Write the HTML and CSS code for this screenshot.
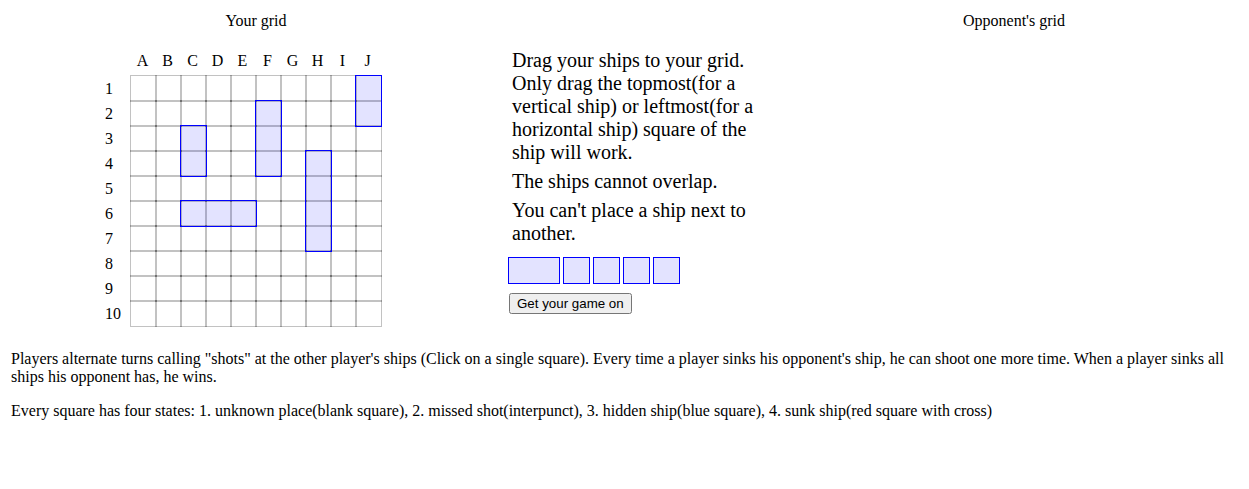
FILE: index.html
```html
<!DOCTYPE html>
<html>
<head>
<meta charset="utf-8">
<title>Battleship</title>
<link rel="stylesheet" href="styles.css">
</head>
<body>
<div class="top">
  <section class="mine">
    <div class="title">Your grid</div>
    <div class="field">
      <div class="corner"></div>
      <div class="cols">
        <span>A</span><span>B</span><span>C</span><span>D</span><span>E</span><span>F</span><span>G</span><span>H</span><span>I</span><span>J</span>
      </div>
      <div class="rows">
        <span>1</span><span>2</span><span>3</span><span>4</span><span>5</span><span>6</span><span>7</span><span>8</span><span>9</span><span>10</span>
      </div>
      <div class="board">
        <div class="cells">
          <div class="cell"></div><div class="cell"></div><div class="cell"></div><div class="cell"></div><div class="cell"></div><div class="cell"></div><div class="cell"></div><div class="cell"></div><div class="cell"></div><div class="cell"></div>
          <div class="cell"></div><div class="cell"></div><div class="cell"></div><div class="cell"></div><div class="cell"></div><div class="cell"></div><div class="cell"></div><div class="cell"></div><div class="cell"></div><div class="cell"></div>
          <div class="cell"></div><div class="cell"></div><div class="cell"></div><div class="cell"></div><div class="cell"></div><div class="cell"></div><div class="cell"></div><div class="cell"></div><div class="cell"></div><div class="cell"></div>
          <div class="cell"></div><div class="cell"></div><div class="cell"></div><div class="cell"></div><div class="cell"></div><div class="cell"></div><div class="cell"></div><div class="cell"></div><div class="cell"></div><div class="cell"></div>
          <div class="cell"></div><div class="cell"></div><div class="cell"></div><div class="cell"></div><div class="cell"></div><div class="cell"></div><div class="cell"></div><div class="cell"></div><div class="cell"></div><div class="cell"></div>
          <div class="cell"></div><div class="cell"></div><div class="cell"></div><div class="cell"></div><div class="cell"></div><div class="cell"></div><div class="cell"></div><div class="cell"></div><div class="cell"></div><div class="cell"></div>
          <div class="cell"></div><div class="cell"></div><div class="cell"></div><div class="cell"></div><div class="cell"></div><div class="cell"></div><div class="cell"></div><div class="cell"></div><div class="cell"></div><div class="cell"></div>
          <div class="cell"></div><div class="cell"></div><div class="cell"></div><div class="cell"></div><div class="cell"></div><div class="cell"></div><div class="cell"></div><div class="cell"></div><div class="cell"></div><div class="cell"></div>
          <div class="cell"></div><div class="cell"></div><div class="cell"></div><div class="cell"></div><div class="cell"></div><div class="cell"></div><div class="cell"></div><div class="cell"></div><div class="cell"></div><div class="cell"></div>
          <div class="cell"></div><div class="cell"></div><div class="cell"></div><div class="cell"></div><div class="cell"></div><div class="cell"></div><div class="cell"></div><div class="cell"></div><div class="cell"></div><div class="cell"></div>
        </div>
        <div class="fleet">
          <div class="ship ship-j"></div>
          <div class="ship ship-f"></div>
          <div class="ship ship-c"></div>
          <div class="ship ship-row6"></div>
          <div class="ship ship-h"></div>
        </div>
      </div>
    </div>
  </section>
  <section class="help">
    <p>Drag your ships to your grid. Only drag the topmost(for a vertical ship) or leftmost(for a horizontal ship) square of the ship will work.</p>
    <p>The ships cannot overlap.</p>
    <p>You can't place a ship next to another.</p>
    <div class="dock">
      <div class="dock-ship dock-ship-2"></div>
      <div class="dock-ship"></div>
      <div class="dock-ship"></div>
      <div class="dock-ship"></div>
      <div class="dock-ship"></div>
    </div>
    <button class="start" type="button">Get your game on</button>
  </section>
  <section class="theirs">
    <div class="title">Opponent's grid</div>
  </section>
</div>
<div class="rules">
  <p>Players alternate turns calling "shots" at the other player's ships (Click on a single square). Every time a player sinks his opponent's ship, he can shoot one more time. When a player sinks all ships his opponent has, he wins.</p>
  <p>Every square has four states: 1. unknown place(blank square), 2. missed shot(interpunct), 3. hidden ship(blue square), 4. sunk ship(red square with cross)</p>
</div>
</body>
</html>
```
FILE: styles.css
```css
html, body {
  background: #ffffff;
}
body {
  margin: 8px;
  font-family: "Liberation Serif", "Times New Roman", serif;
  font-size: 16px;
  color: #000000;
}

.top {
  display: flex;
  align-items: flex-start;
}

.mine {
  width: 496px;
  padding-top: 4px;
  flex: none;
}

.title {
  line-height: 18px;
  text-align: center;
}

.field {
  margin-top: 18px;
  margin-left: 97px;
  display: grid;
  grid-template-columns: 25px 252px;
  grid-template-rows: 25px 252px;
  row-gap: 2px;
}

.cols {
  display: grid;
  grid-template-columns: repeat(10, 25px);
  line-height: 25px;
  text-align: center;
}

.rows {
  display: grid;
  grid-template-rows: repeat(10, 25px);
  align-content: start;
  line-height: 25px;
}
.rows span {
  padding-top: 2px;
  line-height: 23px;
}

.board {
  position: relative;
  background: #ffffff;
}

.cells,
.fleet {
  display: grid;
  grid-template-columns: repeat(10, 25px);
  grid-template-rows: repeat(10, 25px);
}

.fleet {
  position: absolute;
  top: 0;
  left: 0;
}

.cell {
  box-sizing: border-box;
  margin-right: -2px;
  margin-bottom: -2px;
  border: 1px solid rgba(0, 0, 0, 0.24);
}

.ship {
  box-sizing: border-box;
  margin-right: -2px;
  margin-bottom: -2px;
  border: 1px solid #0000ff;
  background: rgba(0, 0, 255, 0.11);
}
.ship-j { grid-column: 10; grid-row: 1 / span 2; }
.ship-f { grid-column: 6; grid-row: 2 / span 3; }
.ship-c { grid-column: 3; grid-row: 3 / span 2; }
.ship-row6 { grid-column: 3 / span 3; grid-row: 6; }
.ship-h { grid-column: 8; grid-row: 4 / span 4; }

.help {
  width: 279px;
  margin-left: 4px;
  padding-top: 41px;
  flex: none;
}
.help p {
  width: 255px;
  margin: 0 0 6px 4px;
  font-size: 20px;
  line-height: 23px;
}

.dock {
  display: flex;
  gap: 3px;
  margin-top: 12px;
}
.dock-ship {
  box-sizing: border-box;
  width: 27px;
  height: 27px;
  border: 1px solid #0000ff;
  background: #e3e3ff;
}
.dock-ship-2 {
  width: 52px;
}

.start {
  display: block;
  margin: 9px 0 0 1px;
  font-family: "Liberation Sans", Arial, sans-serif;
  font-size: 13.333px;
}

.theirs {
  flex: 1;
  padding-top: 4px;
}

.rules {
  margin-top: 23px;
  padding: 0 3px;
}
.rules p {
  margin: 0 0 16px;
}
```
